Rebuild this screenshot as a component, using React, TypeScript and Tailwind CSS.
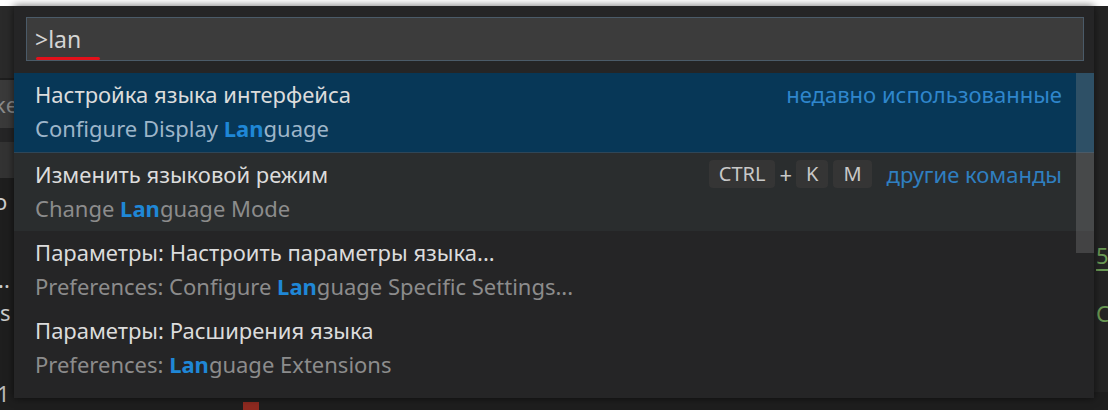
import React from 'react'

const font = { fontFamily: '"Noto Sans", "Open Sans", sans-serif' }

type Item = {
  title: string
  before: string
  after: string
  selected?: boolean
  hover?: boolean
  right?: React.ReactNode
}

function Key({ children }: { children: React.ReactNode }) {
  return (
    <span className="inline-flex h-[28px] items-center rounded-[4px] bg-[#353535] px-[10px] text-[20px] leading-none text-[#c8c8c8]">
      {children}
    </span>
  )
}

const items: Item[] = [
  {
    title: 'Настройка языка интерфейса',
    before: 'Configure Display ',
    after: 'guage',
    selected: true,
    right: <span className="text-[#2f86cc]">недавно использованные</span>,
  },
  {
    title: 'Изменить языковой режим',
    before: 'Change ',
    after: 'guage Mode',
    hover: true,
    right: (
      <div className="flex items-center">
        <Key>CTRL</Key>
        <span className="mx-[4px] text-[22px] text-[#c8c8c8]">+</span>
        <Key>K</Key>
        <span className="w-[5px]" />
        <Key>M</Key>
        <span className="ml-[15px] text-[#2f7fc0]">другие команды</span>
      </div>
    ),
  },
  {
    title: 'Параметры: Настроить параметры языка...',
    before: 'Preferences: Configure ',
    after: 'guage Specific Settings...',
  },
  {
    title: 'Параметры: Расширения языка',
    before: 'Preferences: ',
    after: 'guage Extensions',
  },
]

function Row({ item, first }: { item: Item; first: boolean }) {
  const bg = item.selected ? 'bg-[#073757]' : item.hover ? 'bg-[#2a2d2e]' : ''
  return (
    <div
      className={`flex items-start justify-between pl-[21px] pr-[32px] pt-[4px] ${bg} ${
        first ? 'h-[80px] border-b border-[#2e4658]' : 'h-[78px]'
      }`}
    >
      <div className="flex flex-col text-[22px] leading-[34px]">
        <span className="text-[#dcdcdc]">{item.title}</span>
        <span className={item.selected ? 'text-[#9db5c9]' : 'text-[#8c8c8c]'}>
          {item.before}
          <span className="font-bold text-[#1f87d6]">Lan</span>
          {item.after}
        </span>
      </div>
      <div className="flex h-[34px] items-center text-[22px]">{item.right}</div>
    </div>
  )
}

export default function App() {
  return (
    <div className="relative h-[410px] w-[1108px] overflow-hidden bg-white" style={font}>
      {/* editor behind the widget */}
      <div className="absolute inset-x-0 bottom-0 top-[6px] bg-[#1e1e1e]">
        <div className="absolute left-0 top-0 h-[72px] w-[14px] bg-[#2a2a2a]" />
        <div className="absolute left-0 top-[74px] h-[48px] w-[14px] overflow-hidden bg-[#3a3a3a] text-[22px] leading-[48px] text-[#8a8a8a]">
          <span className="-ml-[6px]">ke</span>
        </div>
        <div className="absolute left-0 top-[122px] h-[14px] w-[14px] bg-[#252526]" />
        <div className="absolute left-0 top-[136px] h-[36px] w-[14px] bg-[#333333]" />
        <div className="absolute left-0 top-[184px] w-[14px] overflow-hidden text-[22px] leading-none text-[#cccccc]">
          <span className="-ml-[6px]">o</span>
        </div>
        <div className="absolute left-0 top-[262px] w-[14px] overflow-hidden text-[22px] leading-none text-[#cccccc]">
          <span className="-ml-[2px]">..</span>
        </div>
        <div className="absolute left-0 top-[295px] w-[14px] overflow-hidden text-[22px] leading-none text-[#cccccc]">
          <span>s</span>
        </div>
        <div className="absolute left-0 top-[376px] w-[14px] overflow-hidden text-[22px] leading-none text-[#bbbbbb]">
          <span className="-ml-[3px]">1</span>
        </div>
        <div className="absolute right-0 top-0 h-[386px] w-[14px] bg-[#242424]" />
        <div className="absolute left-[1096px] top-[238px] text-[22px] leading-none text-[#6a9955]">5</div>
        <div className="absolute left-[1096px] top-[263px] h-[2px] w-[12px] bg-[#6a9955]" />
        <div className="absolute left-[1096px] top-[296px] text-[22px] leading-none text-[#6a9955]">C</div>
        <div className="absolute left-[243px] top-[396px] h-[10px] w-[16px] bg-[#8e2a20]" />
      </div>

      {/* command palette */}
      <div className="absolute left-[14px] top-[6px] flex h-[392px] w-[1080px] flex-col bg-[#252526] shadow-[0_0_8px_rgba(0,0,0,0.6)]">
        <div className="px-[12px] pr-[10px] pt-[11px]">
          <div className="relative flex h-[44px] items-center border border-[#4b5b69] bg-[#3c3c3c] pl-[8px] text-[23px] text-[#d4d4d4]">
            <span>&gt;lan</span>
            <div className="absolute left-[9px] top-[39px] h-[3px] w-[64px] rounded-full bg-[#e3101a]" />
          </div>
        </div>
        <div className="relative mt-[12px]">
          {items.map((it, i) => (
            <Row key={i} item={it} first={i === 0} />
          ))}
          <div className="absolute right-0 top-0 h-[180px] w-[18px] bg-[#8a8a8a]/30" />
        </div>
      </div>
    </div>
  )
}
